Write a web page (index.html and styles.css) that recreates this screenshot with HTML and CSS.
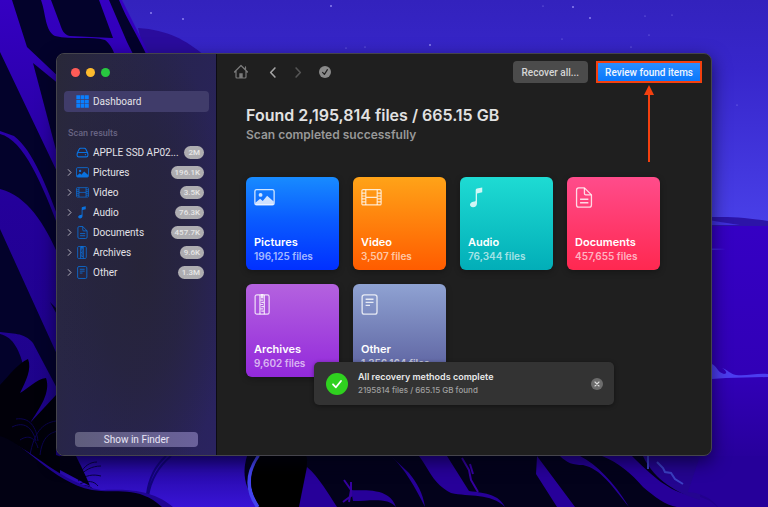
FILE: index.html
```html
<!DOCTYPE html>
<html lang="en">
<head>
<meta charset="utf-8">
<meta name="viewport" content="width=device-width, initial-scale=1">
<title>Scan results</title>
<link rel="stylesheet" href="styles.css">
</head>
<body>
<svg class="wallpaper" viewBox="0 0 768 507" preserveAspectRatio="none" aria-hidden="true">
  <defs>
    <linearGradient id="sky" x1="0" y1="0" x2="0" y2="1"><stop offset="0" stop-color="#3322bd"/><stop offset=".3" stop-color="#3726cb"/><stop offset="1" stop-color="#4940e8"/></linearGradient>
    <linearGradient id="sea" x1="0" y1="0" x2="0" y2="1"><stop offset="0" stop-color="#3500c4"/><stop offset=".55" stop-color="#3100b6"/><stop offset="1" stop-color="#21008a"/></linearGradient>
    <linearGradient id="rock" x1="0" y1="0" x2="0" y2="1"><stop offset="0" stop-color="#3500c2"/><stop offset=".4" stop-color="#24009a"/><stop offset="1" stop-color="#1a0580"/></linearGradient>
    <linearGradient id="pool" x1="0" y1="0" x2="0" y2="1"><stop offset="0" stop-color="#22069a"/><stop offset="1" stop-color="#3814d6"/></linearGradient>
  </defs>
  <rect width="768" height="226" fill="url(#sky)"/>
  <rect y="225" width="768" height="282" fill="url(#sea)"/>
  <path d="M700 217c20 0 38-1 68 4v5h-68z" fill="#2c14a8"/>
  <path d="M700 218c12 3 20 4 40 7h-40z" fill="#4030dd"/>
  <path d="M700 248l26 1-26 2z" fill="#4326e0"/>
  <path d="M712 364c5 2 5 8 12 10 4 0 2-4-2-6 6 2 8 6 14 7 12 1 20-2 32-1v3l-42 1-14 1z" fill="#4c3df0"/>
  <g fill="#8c82ef">
    <circle cx="151" cy="13" r="1"/><circle cx="183" cy="19" r="1"/><circle cx="331" cy="6" r="1"/><circle cx="430" cy="45" r="1"/><circle cx="573" cy="7" r="1"/><circle cx="590" cy="18" r="1"/><circle cx="543" cy="6" r=".6"/><circle cx="649" cy="35" r=".6"/><circle cx="645" cy="16" r=".6"/><circle cx="672" cy="15" r=".6"/><circle cx="631" cy="47" r=".6"/><circle cx="365" cy="47" r=".6"/><circle cx="346" cy="48" r=".6"/><circle cx="562" cy="39" r=".6"/><circle cx="737" cy="105" r=".6"/>
  </g>
  <path d="M138 28c30 2 48 12 67 28h-60z" fill="#2a0c9d"/>
  <path d="M0 0h122l28 56v451H0z" fill="url(#rock)"/>
  <g fill="#03022b">
    <path d="M12 0h29c5 14 4 31 14 36 17 4 36 0 50 4 5 4 8 9 10 16H62V80L27 47z"/>
    <path d="M51 0h48l14 38-43-2c-6-1-8-6-10-12z"/>
    <path d="M109 0h10c8 20 19 36 28 56h-13l-7-14z"/>
    <path d="M33 63l27 22v80z"/>
    <path d="M0 52l60 126v44C48 190 33 150 14 136L0 131z"/>
    <path d="M0 134c24 6 42 50 60 97v28C46 226 28 196 0 189z"/>
    <path d="M0 229l60 132v33L33 343C24 332 12 334 0 332z"/>
    <path d="M0 334c14 3 20 18 24 34L0 390zM50 302l10 18v-8z"/>
  </g>
  <g fill="#010009">
    <path d="M0 385c8-8 18-22 28-26 4 10-2 22-8 34 8-4 16-14 26-15 5 14-6 30-16 45l26-28v60l35 12c-6 14-22 14-30 10L0 500z"/>
    <path d="M76 458h18c2 8-12 14-16 6z"/>
  </g>
  <path d="M60 456h640v51H60z" fill="url(#pool)"/>
  <g fill="none" stroke="#0b0450">
    <path d="M12 427c12-6 20 0 24 14M16 419c14-2 20 8 22 22M30 455c4-22 12-32 26-34M40 455c2-16 8-22 18-24M20 440c9-6 15-2 18 8"/>
    <path d="M78 478c6-8 14-12 23-12M78 481c8-6 15-7 23-5M80 484c8-4 14-3 18 2M82 486c6-1 10 1 13 6M80 474c4-8 10-12 17-12" stroke="#08033f"/>
    <path d="M171 456c-12 10-20 22-23 40M166 456c-11 10-17 22-19 38" stroke="#12047a" stroke-width="2"/>
  </g>
  <path d="M60 456h16c4 8 10 20 14 30l-30-16z" fill="#020012"/>
  <path d="M7 441c25 8 54 42 94 49 18 0 48-3 72 17H60z" fill="#200592"/>
  <path d="M0 436c24 6 52 46 92 54 24 4 46-5 70 17H0z" fill="#020113"/>
  <path d="M247 456h453v51H258c-14-20-16-34-11-51z" fill="#03021b"/>
  <path d="M259 456c-13 18-13 34-1 51" fill="none" stroke="#4343ed" stroke-width="4"/>
  <path d="M260 456h46c4 4-4 30-7 51h-39c-12-18-12-34 0-51z" fill="#000"/>
  <g fill="#270099">
    <path d="M307 467c12 10 22 28 30 40h-38z"/>
    <path d="M391 456l18 17c8 10 14 20 16 34-10-20-20-38-34-51zM419 456h28l22 35c18 2 30 4 36 16-14-14-36-10-54-14-18-9-22-24-32-37z"/>
    <path d="M351 490c14 1 38-3 45 17-8-10-26-6-43-6z"/>
    <path d="M537 456l38 51h-18l-21-33zM560 456h20c16 8 34 26 49 51-18-22-28-38-46-42-10 0-16-2-23-9zM602 456h30c20 20 38 36 58 39 12 1 22 6 27 12h-40c-12-2-22-10-34-20-12-14-24-24-41-31z"/>
  </g>
  <path d="M643 456h57v44c-22-6-46-20-57-44z" fill="#24058f"/>
  <path d="M700 456h68v51h-50c-8-10-18-14-30-15z" fill="#26009a"/>
  <path d="M648 456v13M657 462l6 6 2 4 6 1 4 6 8 5" fill="none" stroke="#3b40c4" stroke-width="2"/>
  <path d="M344 480l7 10-2 12M351 482v14l-8 6M462 458l7 12 2 10 7 12M470 464l3 10" fill="none" stroke="#35009f" stroke-width="2"/>
</svg>

<svg class="sprite" aria-hidden="true">
  <symbol id="i-chevron" viewBox="0 0 6 10"><path d="M1.500 1.500 4.800 5 1.500 8.500" fill="none" stroke="currentColor" stroke-width="1.200" stroke-linecap="round" stroke-linejoin="round"/></symbol>
  <symbol id="i-grid" viewBox="0 0 12 12"><path d="M.3.3h3.500v3.500H.3zM4.300.3h3.500v3.500H4.300zM8.300.3h3.500v3.500H8.300zM.3 4.300h3.500v3.500H.3zM4.300 4.300h3.500v3.500H4.300zM8.300 4.300h3.500v3.500H8.300zM.3 8.300h3.500v3.500H.3zM4.300 8.300h3.500v3.500H4.300zM8.300 8.300h3.500v3.500H8.300z" fill="currentColor"/></symbol>
  <symbol id="i-drive" viewBox="0 0 24 24"><g fill="none" stroke="currentColor" stroke-width="2"><path d="M2 14 6 5.500Q6.500 4 8.500 4h7q2 0 2.500 1.500L22 14"/><rect x="2" y="12" width="20" height="8" rx="3"/></g><circle cx="17.500" cy="16" r="1.300" fill="currentColor"/></symbol>
  <symbol id="i-picture" viewBox="0 0 24 24"><rect x="1" y="3" width="22" height="17.500" rx="2" fill="none" stroke="currentColor" stroke-width="1.500"/><circle cx="7.500" cy="9" r="2.200" fill="currentColor"/><path d="M1.500 18 7 13.500l3 2.500 5-6 7.500 6.500V19q0 1.500-1.500 1.500H3Q1.500 20.500 1.500 19z" fill="currentColor"/></symbol>
  <symbol id="i-video" viewBox="0 0 24 24"><g fill="none" stroke="currentColor" stroke-width="1.300"><rect x="1" y="3" width="22" height="17.500" rx="1.500"/><path d="M5.500 3v17.500M18.500 3v17.500M5.500 11.800h13M1 7h4.500M1 10.300h4.500M1 13.500h4.500M1 17h4.500M18.500 7H23M18.500 10.300H23M18.500 13.500H23M18.500 17H23"/></g></symbol>
  <symbol id="i-audio" viewBox="0 0 20 24"><path d="M8.500 3.500Q8.500 2 10 1.700L16 .5V6l-6 1.300V18.500c0 3-2 4.500-4.500 4.500S1.800 21.500 2 20c.3-2.500 3-3.500 5-3.500q1.500 0 1.500-1.500z" fill="currentColor"/></symbol>
  <symbol id="i-document" viewBox="0 0 20 24"><g fill="none" stroke="currentColor" stroke-width="1.500" stroke-linejoin="round"><path d="M4 1h6.500l8 8v11.500Q18.500 23 16 23H4Q1.500 23 1.500 20.500v-17Q1.500 1 4 1z"/><path d="M10.500 1v6.500Q10.500 9 12 9h6.500M5.500 14H15M5.500 18H15"/></g></symbol>
  <symbol id="i-archive" viewBox="0 0 20 24"><g fill="none" stroke="currentColor" stroke-width="1.400"><rect x="1" y="1" width="16" height="22" rx="2"/><path d="M6.500 1v22M11.500 1v22"/><path d="M7 7h3M8 9.500h3M7 12h3M8 14.500h3M7 17h3M8 19.500h3"/></g><path d="M7.500 0h3v5h-3z" fill="currentColor"/></symbol>
  <symbol id="i-other" viewBox="0 0 20 24"><g fill="none" stroke="currentColor" stroke-width="1.500"><rect x="1" y="1" width="17" height="22" rx="2.500"/><path d="M5 6h9M5 9.500h9M5 13h5"/></g></symbol>
  <symbol id="i-home" viewBox="0 0 16 16"><path d="M1.500 8 8 1.500 14.500 8M3 6.800v6.200q0 1 1 1h8q1 0 1-1V6.800M12.500 5.500V2.800" fill="none" stroke="currentColor" stroke-width="1.200" stroke-linecap="round" stroke-linejoin="round"/><path d="M6.300 9.200h3.400V14H6.300z" fill="currentColor"/></symbol>
  <symbol id="i-seal" viewBox="0 0 12 12"><circle cx="6" cy="6" r="6" fill="currentColor"/><path d="m3.600 6.400 1.800 1.900 3-4.600" fill="none" stroke="#1f1f1f" stroke-width="1.200" stroke-linecap="round" stroke-linejoin="round"/></symbol>
</svg>

<div class="window">
  <aside class="sidebar">
    <div class="lights">
      <button class="light close" aria-label="Close"></button>
      <button class="light minimize" aria-label="Minimize"></button>
      <button class="light zoom" aria-label="Zoom"></button>
    </div>
    <nav class="nav">
      <a class="dashboard" href="#dashboard"><svg class="icon"><use href="#i-grid"/></svg>Dashboard</a>
      <h2 class="section">Scan results</h2>
      <ul class="tree">
        <li><a class="row" href="#drive"><span class="chevron"></span><svg class="icon"><use href="#i-drive"/></svg><span class="name">APPLE SSD AP02...</span><span class="badge">2M</span></a></li>
        <li><a class="row" href="#pictures"><svg class="chevron"><use href="#i-chevron"/></svg><svg class="icon"><use href="#i-picture"/></svg><span class="name">Pictures</span><span class="badge">196.1K</span></a></li>
        <li><a class="row" href="#video"><svg class="chevron"><use href="#i-chevron"/></svg><svg class="icon"><use href="#i-video"/></svg><span class="name">Video</span><span class="badge">3.5K</span></a></li>
        <li><a class="row" href="#audio"><svg class="chevron"><use href="#i-chevron"/></svg><svg class="icon"><use href="#i-audio"/></svg><span class="name">Audio</span><span class="badge">76.3K</span></a></li>
        <li><a class="row" href="#documents"><svg class="chevron"><use href="#i-chevron"/></svg><svg class="icon"><use href="#i-document"/></svg><span class="name">Documents</span><span class="badge">457.7K</span></a></li>
        <li><a class="row" href="#archives"><svg class="chevron"><use href="#i-chevron"/></svg><svg class="icon"><use href="#i-archive"/></svg><span class="name">Archives</span><span class="badge">9.6K</span></a></li>
        <li><a class="row" href="#other"><svg class="chevron"><use href="#i-chevron"/></svg><svg class="icon"><use href="#i-other"/></svg><span class="name">Other</span><span class="badge">1.3M</span></a></li>
      </ul>
    </nav>
    <button class="finder">Show in Finder</button>
  </aside>

  <main class="main">
    <header class="toolbar">
      <div class="tools">
        <button class="tool" aria-label="Home"><svg class="glyph"><use href="#i-home"/></svg></button>
        <div class="history">
          <button class="tool" aria-label="Back"><svg class="arrow back"><use href="#i-chevron"/></svg></button>
          <button class="tool dim" aria-label="Forward"><svg class="arrow"><use href="#i-chevron"/></svg></button>
          <button class="tool" aria-label="Scan status"><svg class="seal"><use href="#i-seal"/></svg></button>
        </div>
      </div>
      <div class="actions">
        <button class="recover">Recover all...</button>
        <div class="callout">
          <button class="review">Review found items</button>
          <svg class="pointer" viewBox="0 0 10 78" aria-hidden="true"><path d="M5 8v69" stroke="#f4400f" stroke-width="2"/><path d="M5 0l5 10H0z" fill="#f4400f"/></svg>
        </div>
      </div>
    </header>

    <section class="content">
      <h1 class="title">Found 2,195,814 files / 665.15 GB</h1>
      <p class="subtitle">Scan completed successfully</p>
      <div class="cards">
        <a class="card pictures" href="#pictures"><svg class="card-icon"><use href="#i-picture"/></svg><span class="card-name">Pictures</span><span class="card-count">196,125 files</span></a>
        <a class="card video" href="#video"><svg class="card-icon"><use href="#i-video"/></svg><span class="card-name">Video</span><span class="card-count">3,507 files</span></a>
        <a class="card audio" href="#audio"><svg class="card-icon slim"><use href="#i-audio"/></svg><span class="card-name">Audio</span><span class="card-count">76,344 files</span></a>
        <a class="card documents" href="#documents"><svg class="card-icon slim"><use href="#i-document"/></svg><span class="card-name">Documents</span><span class="card-count">457,655 files</span></a>
        <a class="card archives" href="#archives"><svg class="card-icon slim"><use href="#i-archive"/></svg><span class="card-name">Archives</span><span class="card-count">9,602 files</span></a>
        <a class="card other" href="#other"><svg class="card-icon slim"><use href="#i-other"/></svg><span class="card-name">Other</span><span class="card-count">1,356,164 files</span></a>
      </div>
    </section>

    <div class="toast" role="status">
      <svg class="toast-icon" viewBox="0 0 22 22" aria-hidden="true"><circle cx="11" cy="11" r="11" fill="#2fd11f"/><path d="m7 11.300 2.900 3L15 8" fill="none" stroke="#fff" stroke-width="1.800" stroke-linecap="round" stroke-linejoin="round"/></svg>
      <div class="toast-text">
        <strong class="toast-title">All recovery methods complete</strong>
        <span class="toast-detail">2195814 files / 665.15 GB found</span>
      </div>
      <button class="dismiss" aria-label="Dismiss"><svg class="cross" viewBox="0 0 12 12"><circle cx="6" cy="6" r="6" fill="#6c6c6c"/><path d="m4 4 4 4M8 4 4 8" stroke="#ddd" stroke-width="1.100" stroke-linecap="round"/></svg></button>
    </div>
  </main>
</div>
</body>
</html>
```
FILE: styles.css
```css
* { box-sizing: border-box; }

body {
  margin: 0;
  min-height: 100vh;
  padding: 53px 56px 51px;
  display: flex;
  font-family: Inter, "Liberation Sans", sans-serif;
  font-size: 10px;
  color: #e3e2e8;
  background: #2a0aa8;
}

button {
  border: 0;
  padding: 0;
  font: inherit;
  color: inherit;
  background: none;
}

a { color: inherit; text-decoration: none; }
svg { display: block; flex: none; }

.wallpaper {
  position: absolute;
  inset: 0;
  width: 100%;
  height: 100%;
  z-index: -1;
}

.sprite { position: absolute; width: 0; height: 0; }

.window {
  flex: 1;
  display: flex;
  border: 1px solid #45444c;
  border-radius: 8px;
  overflow: hidden;
  background: #1f1f1f;
  box-shadow: 0 6px 18px rgba(0, 0, 20, .6);
}

.sidebar {
  flex: none;
  width: 160px;
  padding: 14px 7px 8px;
  display: flex;
  flex-direction: column;
  border-right: 1px solid #0c0b14;
  font-family: Roboto, Inter, sans-serif;
  background:
    radial-gradient(ellipse 90px 230px at 85px 210px, rgba(38, 36, 54, .9), rgba(38, 36, 54, .6) 50%, transparent),
    linear-gradient(100deg, #292839 0%, #27244e 45%, #2a2360 100%);
}

.lights { display: flex; gap: 6px; padding-left: 7px; }
.light { width: 9px; height: 9px; border-radius: 50%; }
.close { background: #fe5b57; }
.minimize { background: #fdbb2e; }
.zoom { background: #28c840; }

.nav { flex: 1; margin-top: 14px; }

.dashboard {
  display: flex;
  align-items: center;
  gap: 4px;
  height: 21px;
  padding-left: 12px;
  border-radius: 4px;
  background: #403c6a;
}

.icon { width: 13px; height: 13px; color: #0a7fff; }

.section {
  margin: 14px 4px 2px;
  font-size: 9px;
  line-height: 14px;
  font-weight: 500;
  color: #686483;
}

.tree { margin: 0; padding: 0; list-style: none; }

.row {
  display: flex;
  align-items: center;
  gap: 4px;
  height: 20px;
  padding: 0 5px 0 3px;
}

.row .icon { color: #0a72e0; }
.chevron { flex: none; width: 5px; height: 9px; color: #b0aebb; }
.name { flex: 1; white-space: nowrap; }

.badge {
  padding: 0 4px;
  border-radius: 7px;
  font-size: 8px;
  line-height: 13px;
  font-weight: 500;
  color: #e6e6e6;
  background: #aeadb1;
}

.finder {
  height: 15px;
  margin: 0 11px;
  border-radius: 4px;
  color: #e9e6f6;
  background: linear-gradient(90deg, #5f5d7c, #6a619b);
}

.main { position: relative; flex: 1; min-width: 0; }

.toolbar {
  display: flex;
  justify-content: space-between;
  align-items: center;
  padding: 7px 9px 0 16px;
}

.tools, .history, .actions { display: flex; align-items: center; }
.tools { gap: 20px; }
.history { gap: 17px; }
.actions { gap: 8px; }
.tool { color: #7b7b7b; }
.dim { color: #555; }
.glyph { width: 16px; height: 16px; }
.seal { width: 12px; height: 12px; color: #8a8a8a; }
.arrow { width: 8px; height: 13px; }
.back { transform: scaleX(-1); color: #a5a5a5; }

.recover,
.review {
  height: 22px;
  font-family: Roboto, Inter, sans-serif;
  font-weight: 500;
}

.recover {
  padding: 0 9px;
  border-radius: 4px;
  color: #d6d6d6;
  background: #4b4b4b;
}

.callout { position: relative; }

.review {
  padding: 0 7px;
  border: 2px solid #f4400f;
  color: #f0f6ff;
  background: linear-gradient(#2a8dff, #0a78fb);
}

.pointer {
  position: absolute;
  top: 24px;
  left: calc(50% - 5px);
  width: 10px;
  height: 78px;
}

.content { padding: 21px 28px 0 29px; }

.title {
  margin: 0;
  font-size: 16px;
  line-height: 22px;
  font-weight: 600;
  color: #e2e2e2;
}

.subtitle {
  margin: 0;
  font-size: 12px;
  line-height: 18px;
  font-weight: 600;
  color: #989898;
}

.cards {
  display: grid;
  grid-template-columns: repeat(auto-fill, 93px);
  gap: 14px;
  margin-top: 33px;
}

.card {
  display: flex;
  flex-direction: column;
  height: 93px;
  padding: 10px 8px 7px;
  border-radius: 6px;
  box-shadow: 0 2px 6px rgba(0, 0, 0, .3);
}

.pictures { background: linear-gradient(#188bff, #0a5cff 45%, #0130ff); }
.video { background: linear-gradient(#ffa318, #ff5c00); }
.audio { background: linear-gradient(#1edbd3, #02aeb8); }
.documents { background: linear-gradient(#ff4c8b, #ff2850); }
.archives { background: linear-gradient(#b462df, #9329db); }
.other { background: linear-gradient(#8fa2d2, #5a5f9e); }

.card-icon { width: 21px; height: 21px; color: rgba(255, 255, 255, .8); }
.slim { width: 18px; }

.card-name {
  margin-top: auto;
  font-size: 11px;
  line-height: 14px;
  font-weight: 600;
  color: #fff;
}

.card-count {
  font-size: 10px;
  line-height: 14px;
  font-weight: 600;
  color: rgba(255, 255, 255, .65);
}

.toast {
  position: absolute;
  left: calc(50% - 150px);
  bottom: 50px;
  width: 300px;
  padding: 8px 11px 8px 12px;
  display: flex;
  align-items: center;
  gap: 10px;
  border-radius: 5px;
  background: #333;
  box-shadow: 0 1px 4px rgba(0, 0, 0, .4);
}

.toast-icon { width: 22px; height: 22px; }
.toast-text { flex: 1; display: flex; flex-direction: column; }

.toast-title {
  font-size: 9px;
  line-height: 14px;
  font-weight: 600;
  color: #e8e8e8;
}

.toast-detail {
  font-size: 8px;
  line-height: 13px;
  font-weight: 500;
  color: #a0a0a0;
}

.cross { width: 12px; height: 12px; }
```
